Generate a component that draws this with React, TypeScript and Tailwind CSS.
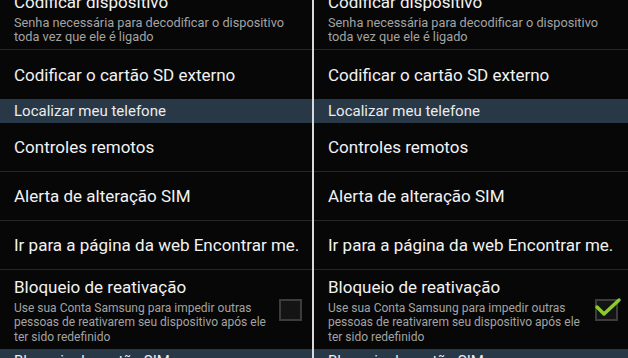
import React from 'react';

const font = { fontFamily: 'Roboto, "Noto Sans", sans-serif' };

// Linha simples com título apenas
const Row = ({ title }: { title: string }) => (
  <div className="shrink-0 h-[49px] flex items-center px-[14px] border-b border-[#262626] text-[17px] text-[#f2f2f2] leading-[20px] whitespace-nowrap">
    {title}
  </div>
);

// Cabeçalho de seção azul-acinzentado
const Header = ({ title }: { title: string }) => (
  <div className="shrink-0 h-[24px] flex items-center px-[14px] bg-[#283847] text-[15px] text-[#ececec] leading-[20px] whitespace-nowrap">
    {title}
  </div>
);

const Panel = ({ checked }: { checked: boolean }) => (
  <div className="flex flex-col bg-[#070707] h-full overflow-hidden">
    {/* Primeira linha cortada no topo */}
    <div className="shrink-0 h-[50px] px-[14px] border-b border-[#262626] whitespace-nowrap">
      <div className="-mt-[8px] text-[17px] leading-[20px] text-[#f2f2f2]">Codificar dispositivo</div>
      <div className="mt-[4px] text-[12.75px] leading-[14px] text-[#a3a3a3]">
        <div>Senha necessária para decodificar o dispositivo</div>
        <div>toda vez que ele é ligado</div>
      </div>
    </div>
    <div className="shrink-0 h-[49px] flex items-center px-[14px] text-[17px] text-[#f2f2f2] leading-[20px] whitespace-nowrap">
      Codificar o cartão SD externo
    </div>
    <Header title="Localizar meu telefone" />
    <Row title="Controles remotos" />
    <Row title="Alerta de alteração SIM" />
    <Row title="Ir para a página da web Encontrar me." />
    <div className="shrink-0 h-[79px] flex items-center pl-[14px] pr-[10px] whitespace-nowrap">
      <div className="flex-1 mt-[2px]">
        <div className="text-[17px] leading-[20px] text-[#f2f2f2]">Bloqueio de reativação</div>
        <div className="mt-[4px] text-[12px] leading-[14.5px] text-[#a3a3a3]">
          <div>Use sua Conta Samsung para impedir outras</div>
          <div>pessoas de reativarem seu dispositivo após ele</div>
          <div>ter sido redefinido</div>
        </div>
      </div>
      <div className="relative shrink-0 w-[23px] h-[22px] border-2 border-[#3c3c3c] bg-[#141414]">
        {checked && (
          <svg className="absolute -left-[1px] -top-[1px] overflow-visible" width="24" height="22" viewBox="0 0 24 22">
            <path d="M1 7 L8 14 L23 0" fill="none" stroke="#8ccb2f" strokeWidth="3.5" strokeLinecap="round" strokeLinejoin="round" />
          </svg>
        )}
      </div>
    </div>
    <Header title="Bloqueio do cartão SIM" />
  </div>
);

export default function App() {
  return (
    <div className="w-[628px] h-[358px] flex overflow-hidden bg-[#070707]" style={font}>
      <div className="w-[312px] h-full">
        <Panel checked={false} />
      </div>
      <div className="w-[2px] h-full bg-[#d9d9d9]" />
      <div className="flex-1 h-full">
        <Panel checked />
      </div>
    </div>
  );
}
